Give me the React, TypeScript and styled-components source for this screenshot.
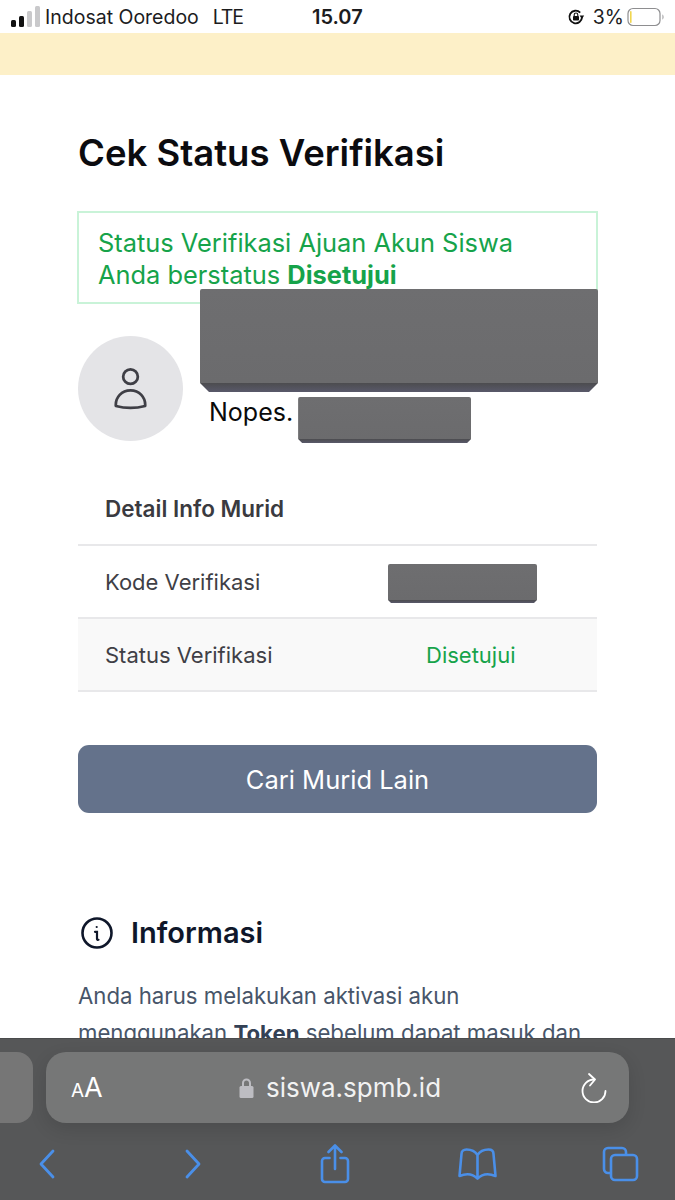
import styled, { createGlobalStyle } from 'styled-components';

const Global = createGlobalStyle`
  html, body {
    margin: 0;
    padding: 0;
    background: #fff;
  }
  * {
    box-sizing: border-box;
  }
`;

const Page = styled.div`
  width: 675px;
  height: 1200px;
  display: flex;
  flex-direction: column;
  overflow: hidden;
  background: #fff;
  font-family: Inter, 'Liberation Sans', sans-serif;
`;

// status bar
const StatusBar = styled.div`
  height: 33px;
  flex: none;
  display: grid;
  grid-template-columns: 1fr 1fr;
  align-items: center;
  padding: 0 10px 0 11px;
  font-size: 19.5px;
  color: #1c1c1e;
  position: relative;
`;
const Carrier = styled.div`
  display: flex;
  align-items: center;
  gap: 5px;
`;
const Network = styled.span`
  margin-left: 9px;
  letter-spacing: -1.2px;
`;
const Clock = styled.span`
  position: absolute;
  left: 312px;
  top: 5px;
  font-weight: 600;
  font-size: 20px;
`;
const BatteryGroup = styled.div`
  display: flex;
  align-items: center;
  justify-content: flex-end;
  gap: 3px;
`;
const Percent = styled.span`
  margin-left: 5px;
`;
const Banner = styled.div`
  height: 42px;
  flex: none;
  background: #fdf0c8;
`;

// content
const Content = styled.main`
  flex: 1;
  min-height: 0;
  overflow: hidden;
  padding: 54px 78px 0;
`;
const Title = styled.h1`
  margin: 0;
  font-size: 36.5px;
  line-height: 48px;
  font-weight: 600;
  color: #0b0b0f;
`;
const Alert = styled.div`
  margin: 34px -1px 0 -1px;
  height: 93px;
  padding: 14px 19px;
  border: 2px solid #c9f3d8;
  color: #16a34a;
  font-size: 25.4px;
  line-height: 32px;
`;
const Strong = styled.strong`
  font-weight: 700;
`;
const Profile = styled.div`
  margin-top: 32px;
  display: flex;
  gap: 17px;
`;
const Avatar = styled.div`
  width: 105px;
  height: 105px;
  flex: none;
  border-radius: 50%;
  background: #e4e4e7;
  display: flex;
  align-items: center;
  justify-content: center;
  color: #3f3f46;
`;
const ProfileInfo = styled.div`
  flex: 1;
  margin-top: -47px;
  position: relative;
`;
const Redacted = styled.div<{ $w: number | string; $h: number; $bevel: number }>`
  width: ${(p) => (typeof p.$w === 'number' ? `${p.$w}px` : p.$w)};
  height: ${(p) => p.$h}px;
  flex: none;
  border-radius: 2px;
  background: linear-gradient(
    to bottom,
    #6e6e70 0,
    #6b6b6d calc(100% - ${(p) => p.$bevel}px),
    #4c4c4f calc(100% - ${(p) => p.$bevel}px),
    #59596a 100%
  );
  clip-path: polygon(
    0 0,
    100% 0,
    100% calc(100% - ${(p) => p.$bevel}px),
    calc(100% - ${(p) => p.$bevel}px) 100%,
    ${(p) => p.$bevel}px 100%,
    0 calc(100% - ${(p) => p.$bevel}px)
  );
`;
const CodeRedacted = styled(Redacted)`
  margin-top: 4px;
`;
const Nopes = styled.div`
  margin-top: 5px;
  padding-left: 9px;
  display: flex;
  gap: 5px;
  font-size: 25px;
  line-height: 30px;
  color: #0a0a0a;
`;

const Table = styled.div`
  margin-top: 30px;
  color: #3f3f46;
  font-size: 22px;
`;
const Row = styled.div<{ $shaded?: boolean }>`
  height: 73px;
  display: grid;
  grid-template-columns: 283px 1fr;
  align-items: center;
  padding-left: 27px;
  border-bottom: 2px solid #e8e8ea;
  background: ${(p) => (p.$shaded ? '#f9f9f9' : '#fff')};
`;
const HeadCell = styled.div`
  font-weight: 600;
  font-size: 22.5px;
  color: #3a3a40;
`;
const ApprovedCell = styled.div`
  padding-left: 38px;
  color: #16a34a;
`;
const Button = styled.button`
  display: block;
  width: 100%;
  height: 68px;
  margin-top: 53px;
  border: none;
  border-radius: 11px;
  background: #64728b;
  color: #fff;
  font-family: inherit;
  font-size: 25.5px;
  font-weight: 400;
`;
const InfoHeading = styled.div`
  margin-top: 100px;
  padding-left: 3px;
  display: flex;
  align-items: center;
  gap: 18px;
  font-size: 29px;
  line-height: 40px;
  font-weight: 600;
  color: #0f172a;
`;
const InfoText = styled.p`
  margin: 24px 0 0;
  font-size: 22.2px;
  line-height: 37px;
  color: #475569;
`;
const InfoStrong = styled.strong`
  font-weight: 700;
  color: #334155;
`;

// safari bar
const SafariBar = styled.div`
  height: 161px;
  flex: none;
  position: relative;
  background: #565758;
  box-shadow: 0 -1px 0 #4a4b4c;
`;
const TabRow = styled.div`
  display: flex;
  gap: 13px;
  padding-top: 13px;
`;
const PrevTab = styled.div`
  width: 33px;
  height: 71px;
  flex: none;
  border-radius: 0 16px 16px 0;
  background: #767676;
`;
const UrlPill = styled.div`
  width: 583px;
  height: 71px;
  flex: none;
  border-radius: 20px;
  background: #767777;
  box-shadow: 0 6px 18px rgba(0, 0, 0, 0.12);
  display: grid;
  grid-template-columns: 85px 1fr 70px;
  align-items: center;
  color: #fff;
`;
const TextSize = styled.div`
  padding-left: 25px;
  font-size: 27px;
  line-height: 1;
  display: flex;
  align-items: baseline;
`;
const SmallA = styled.span`
  font-size: 19px;
`;
const UrlText = styled.div`
  display: flex;
  align-items: center;
  justify-content: center;
  gap: 12px;
  margin-right: 10px;
  font-size: 26px;
  color: #f2f2f2;
`;
const Reload = styled.div`
  display: flex;
  justify-content: center;
`;
const ToolRow = styled.div`
  display: flex;
  align-items: center;
  height: 40px;
  margin-top: 21px;
  padding-left: 39px;
  color: #4a8fe8;
`;
const ToolSlot = styled.div<{ $w: number }>`
  width: ${(p) => p.$w}px;
  flex: none;
  display: flex;
`;

const SignalIcon = () => (
  <svg width="29" height="22" viewBox="0 0 29 22">
    <rect x="0" y="14" width="5" height="7" rx="1.5" fill="#111" />
    <rect x="8" y="10" width="5" height="11" rx="1.5" fill="#111" />
    <rect x="16" y="5" width="5" height="16" rx="1.5" fill="#c9c9cb" />
    <rect x="24" y="0" width="5" height="21" rx="1.5" fill="#c9c9cb" />
  </svg>
);

const OrientationIcon = () => (
  <svg width="18" height="18" viewBox="0 0 18 18" fill="none">
    <path d="M15 9a6.300 6.300 0 1 1-1.800-4.400" stroke="#111" strokeWidth="1.800" />
    <path d="M12.600 7.600h4.600L14.900 11z" fill="#111" />
    <rect x="6" y="8" width="6" height="4.600" rx="0.800" fill="#111" />
    <path d="M7.200 8V6.800a1.800 1.800 0 0 1 3.600 0V8" stroke="#111" strokeWidth="1.100" />
  </svg>
);

const BatteryIcon = () => (
  <svg width="38" height="20" viewBox="0 0 38 20" fill="none">
    <rect x="1" y="1.500" width="32" height="17" rx="5" stroke="#8e8e90" strokeWidth="1.200" />
    <rect x="3" y="4" width="1.600" height="12" rx="0.800" fill="#f0d64f" />
    <path d="M35.500 7.500c1.300.4 1.300 4.600 0 5z" fill="#8e8e90" />
  </svg>
);

const UserIcon = () => (
  <svg width="35" height="44" viewBox="0 0 38 48" fill="none" stroke="currentColor" strokeWidth="3">
    <circle cx="19" cy="10.500" r="8" />
    <path d="M3 42.500c-.6-9.500 6.500-17 16-17s16.600 7.500 16 17c-9.500 2.600-22.500 2.600-32 0z" strokeLinejoin="round" />
  </svg>
);

const InfoIcon = () => (
  <svg width="32" height="32" viewBox="0 0 32 32" fill="none" stroke="#0f172a" strokeWidth="2.600">
    <circle cx="16" cy="16" r="14.500" />
    <path d="M14 14.800h2v7.200c0 .8.600 1 1.500.8" strokeWidth="2.200" strokeLinecap="round" />
    <circle cx="15.700" cy="10" r="1.100" fill="#0f172a" stroke="none" />
  </svg>
);

const LockIcon = () => (
  <svg width="15" height="22" viewBox="0 0 15 22" fill="none">
    <path d="M4 10V6a3.500 3.500 0 0 1 7 0v4" stroke="#bdbdc2" strokeWidth="2" />
    <rect x="0.500" y="9" width="14" height="12" rx="1.500" fill="#bdbdc2" />
  </svg>
);

const ReloadIcon = () => (
  <svg width="26" height="30" viewBox="0 0 26 30" fill="none" stroke="currentColor" strokeWidth="1.800" strokeLinecap="round" strokeLinejoin="round">
    <path d="M13 6.500A11.500 11.500 0 1 0 24.500 18" />
    <path d="M8 1l6 5.500-5 6" />
  </svg>
);

const BackIcon = () => (
  <svg width="16" height="30" viewBox="0 0 16 30" fill="none" stroke="currentColor" strokeWidth="2.800" strokeLinecap="round" strokeLinejoin="round">
    <path d="M14 2 2 15l12 13" />
  </svg>
);

const ForwardIcon = () => (
  <svg width="16" height="30" viewBox="0 0 16 30" fill="none" stroke="currentColor" strokeWidth="2.800" strokeLinecap="round" strokeLinejoin="round">
    <path d="M2 2l12 13L2 28" />
  </svg>
);

const ShareIcon = () => (
  <svg width="30" height="40" viewBox="0 0 30 40" fill="none" stroke="currentColor" strokeWidth="2.600" strokeLinecap="round" strokeLinejoin="round">
    <path d="M9.500 14H5a3 3 0 0 0-3 3v18a3 3 0 0 0 3 3h20a3 3 0 0 0 3-3V17a3 3 0 0 0-3-3h-4.500" />
    <path d="M15 25V2M8.500 8 15 1.500 21.500 8" />
  </svg>
);

const BookIcon = () => (
  <svg width="39" height="32" viewBox="0 0 39 32" fill="none" stroke="currentColor" strokeWidth="2.600" strokeLinejoin="round">
    <path d="M19.500 7C17 3 13 1.500 8.500 1.500c-3 0-5 1.800-5 4.500L1.500 28c6-2.500 13-2.500 18 2.500 5-5 12-5 18-2.500L35.500 6c0-2.700-2-4.500-5-4.500-4.500 0-8.500 1.500-11 5.500zM19.500 7v23.500" />
  </svg>
);

const TabsIcon = () => (
  <svg width="37" height="36" viewBox="0 0 37 36" fill="none" stroke="currentColor" strokeWidth="2.600">
    <path d="M8 27H6a4 4 0 0 1-4-4V6a4 4 0 0 1 4-4h14a4 4 0 0 1 4 4v2" />
    <rect x="9" y="9" width="26" height="25" rx="4" />
  </svg>
);

export default function App() {
  return (
    <Page>
      <Global />
      <StatusBar>
        <Carrier>
          <SignalIcon />
          <span>Indosat Ooredoo</span>
          <Network>LTE</Network>
        </Carrier>
        <Clock>15.07</Clock>
        <BatteryGroup>
          <OrientationIcon />
          <Percent>3%</Percent>
          <BatteryIcon />
        </BatteryGroup>
      </StatusBar>
      <Banner />
      <Content>
        <Title>Cek Status Verifikasi</Title>
        <Alert>
          Status Verifikasi Ajuan Akun Siswa
          <br />
          Anda berstatus <Strong>Disetujui</Strong>
        </Alert>
        <Profile>
          <Avatar>
            <UserIcon />
          </Avatar>
          <ProfileInfo>
            <Redacted $w="calc(100% + 1px)" $h={103} $bevel={9} />
            <Nopes>
              <span>Nopes.</span>
              <Redacted $w={173} $h={46} $bevel={4} />
            </Nopes>
          </ProfileInfo>
        </Profile>
        <Table>
          <Row>
            <HeadCell>Detail Info Murid</HeadCell>
          </Row>
          <Row>
            <div>Kode Verifikasi</div>
            <CodeRedacted $w={149} $h={39} $bevel={3} />
          </Row>
          <Row $shaded>
            <div>Status Verifikasi</div>
            <ApprovedCell>Disetujui</ApprovedCell>
          </Row>
        </Table>
        <Button>Cari Murid Lain</Button>
        <InfoHeading>
          <InfoIcon />
          Informasi
        </InfoHeading>
        <InfoText>
          Anda harus melakukan aktivasi akun menggunakan <InfoStrong>Token</InfoStrong> sebelum dapat masuk dan
        </InfoText>
      </Content>
      <SafariBar>
        <TabRow>
          <PrevTab />
          <UrlPill>
            <TextSize>
              <SmallA>A</SmallA>A
            </TextSize>
            <UrlText>
              <LockIcon />
              siswa.spmb.id
            </UrlText>
            <Reload>
              <ReloadIcon />
            </Reload>
          </UrlPill>
        </TabRow>
        <ToolRow>
          <ToolSlot $w={146}>
            <BackIcon />
          </ToolSlot>
          <ToolSlot $w={135}>
            <ForwardIcon />
          </ToolSlot>
          <ToolSlot $w={138}>
            <ShareIcon />
          </ToolSlot>
          <ToolSlot $w={144}>
            <BookIcon />
          </ToolSlot>
          <ToolSlot $w={40}>
            <TabsIcon />
          </ToolSlot>
        </ToolRow>
      </SafariBar>
    </Page>
  );
}
